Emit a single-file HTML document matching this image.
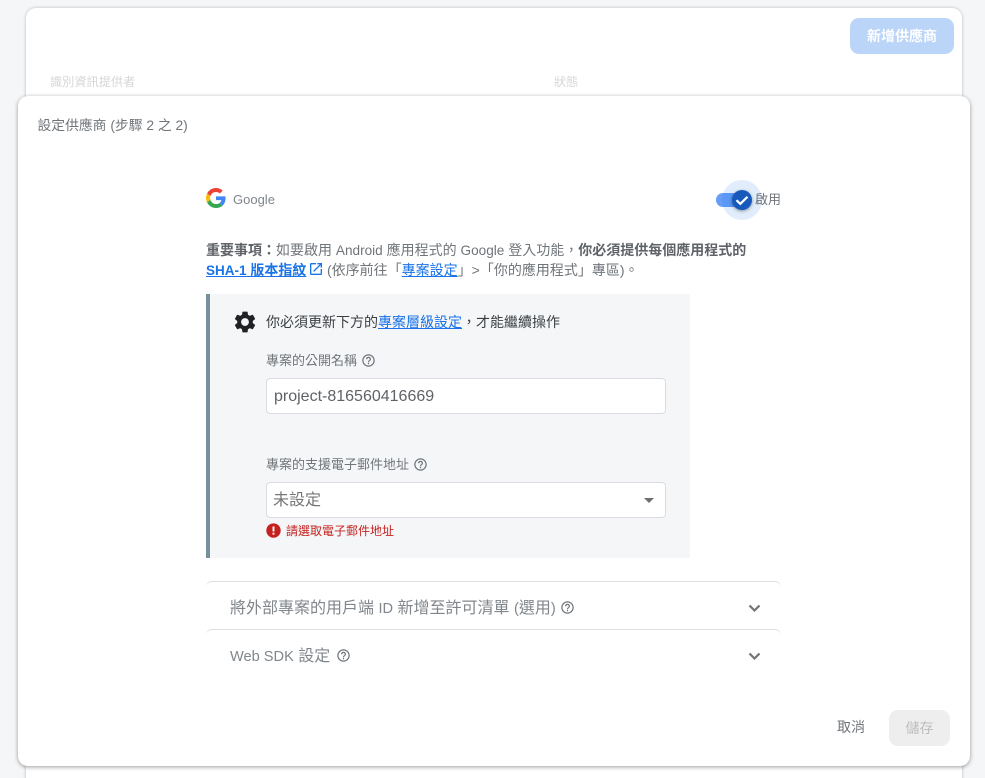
<!DOCTYPE html>
<html lang="zh-Hant">
<head>
<meta charset="utf-8">
<style>
html,body{margin:0;padding:0;width:985px;height:778px;overflow:hidden;background:#f5f6f8;font-family:"Liberation Sans","Noto Sans CJK TC",sans-serif;color:#70757a}
*{box-sizing:border-box}
#root{position:absolute;left:0;top:0;width:985px;height:778px;overflow:hidden}
.a{position:absolute;white-space:nowrap}
a{color:#1a73e8;text-decoration:underline}
.card{position:absolute;left:26px;top:8px;width:936px;height:790px;background:#fff;border-radius:10px;box-shadow:0 0 3px rgba(0,0,0,.25)}
.dlg{position:absolute;left:18px;top:96px;width:952px;height:670px;background:#fff;border-radius:10px;box-shadow:0 1px 4px rgba(0,0,0,.4)}
.t13{font-size:13px;line-height:20px}
.t14{font-size:14px;line-height:20px}
.l{font-size:13.6px}
.hr{position:absolute;left:206px;width:575px;height:8px;border-top:1px solid #dfdfdf;border-radius:6px 6px 0 0}
.field{position:absolute;left:266px;width:400px;height:36px;background:#fff;border:1px solid #dadce0;border-radius:4px}
.big{font-size:16px;line-height:20px;color:#80868b}
.big span{font-size:14.6px}
</style>
</head>
<body>
<div id="root">
<div class="card"></div>
<div class="a" style="left:850px;top:18px;width:104px;height:36px;border-radius:9px;background:#bbd5f8;color:#fff;font-size:14px;font-weight:700;line-height:36px;text-align:center">新增供應商</div>
<div class="a" style="left:50px;top:72px;font-size:12.2px;line-height:20px;color:#d6d6d6">識別資訊提供者</div>
<div class="a" style="left:554px;top:72px;font-size:12.2px;line-height:20px;color:#d6d6d6">狀態</div>

<div class="dlg"></div>
<div class="a" style="left:37.500px;top:116px;font-size:13.8px;line-height:20px;color:#70757a">設定供應商 (步驟 2 之 2)</div>

<svg class="a" style="left:206px;top:188px" width="20" height="20" viewBox="0 0 48 48"><path fill="#EA4335" d="M24 9.5c3.54 0 6.71 1.22 9.21 3.6l6.85-6.85C35.9 2.38 30.47 0 24 0 14.62 0 6.51 5.38 2.56 13.22l7.98 6.19C12.43 13.72 17.74 9.5 24 9.5z"/><path fill="#4285F4" d="M46.98 24.55c0-1.57-.15-3.09-.38-4.55H24v9.02h12.94c-.58 2.96-2.26 5.48-4.8 7.18l7.73 6c4.51-4.18 7.09-10.36 7.09-17.65z"/><path fill="#FBBC05" d="M10.53 28.59c-.48-1.45-.76-2.99-.76-4.59s.27-3.14.76-4.59l-7.98-6.19C.92 16.46 0 20.12 0 24c0 3.88.92 7.54 2.56 10.78l7.97-6.19z"/><path fill="#34A853" d="M24 48c6.48 0 11.93-2.13 15.89-5.81l-7.73-6c-2.15 1.45-4.92 2.3-8.16 2.3-6.26 0-11.57-4.22-13.47-9.91l-7.98 6.19C6.51 42.62 14.62 48 24 48z"/></svg>
<div class="a" style="left:233px;top:190px;font-size:13px;line-height:20px;color:#80868b">Google</div>

<div class="a" style="left:716px;top:193px;width:30px;height:14px;border-radius:7px;background:#669df6"></div>
<div class="a" style="left:722px;top:180px;width:40px;height:40px;border-radius:50%;background:rgba(26,115,232,.13)"></div>
<div class="a" style="left:732px;top:190px;width:20px;height:20px;border-radius:50%;background:#185abc;box-shadow:0 1px 3px rgba(0,0,0,.4)"></div>
<svg class="a" style="left:732px;top:190px" width="20" height="20" viewBox="0 0 20 20"><path d="M4.500 10.200l3.800 3.600L15.500 6.800" fill="none" stroke="#fff" stroke-width="2.200"/></svg>
<div class="a t13" style="left:755px;top:190px;color:#70757a">啟用</div>

<div class="a t14" style="left:206px;top:240px"><b style="color:#5f6368">重要事項&#xFF1A;</b>如要啟用 <span class="l">Android</span> 應用程式的 <span class="l">Google</span> 登入功能&#xFF0C;<b style="color:#5f6368">你必須提供每個應用程式的</b></div>
<div class="a t14" style="left:206px;top:260px"><a href="#" style="font-weight:700"><span style="font-size:13.500px">SHA-1</span> 版本指紋</a></div>
<svg class="a" style="left:308px;top:261px" width="16" height="16" viewBox="0 0 24 24"><path fill="#1a73e8" d="M19 19H5V5h7V3H5a2 2 0 0 0-2 2v14a2 2 0 0 0 2 2h14a2 2 0 0 0 2-2v-7h-2v7zM14 3v2h3.590l-9.830 9.830 1.410 1.410L19 6.410V10h2V3h-7z"/></svg>
<div class="a t14" style="left:327px;top:260px">(依序前往「<a href="#">專案設定</a>」&gt;「你的應用程式」專區)。</div>

<div class="a" style="left:206px;top:294px;width:484px;height:264px;background:#f5f6f8;border-left:4px solid #78909c"></div>
<svg class="a" style="left:232px;top:309px" width="26" height="26" viewBox="0 0 24 24"><path fill="#202124" d="M19.140 12.940c.04-.3.060-.61.060-.94 0-.32-.02-.64-.07-.94l2.030-1.580c.18-.14.230-.41.120-.61l-1.920-3.320c-.12-.22-.37-.29-.59-.22l-2.390.96c-.5-.38-1.030-.7-1.620-.94l-.36-2.540c-.04-.24-.24-.41-.48-.41h-3.840c-.24 0-.43.170-.47.410l-.36 2.540c-.59.24-1.130.57-1.620.94l-2.390-.96c-.22-.08-.47 0-.59.220L2.740 8.870c-.12.210-.08.470.12.610l2.030 1.580c-.05.3-.09.630-.09.940s.02.640.07.940l-2.030 1.580c-.18.14-.23.410-.12.610l1.920 3.320c.12.220.37.290.59.220l2.390-.96c.5.38 1.030.7 1.620.94l.36 2.540c.05.240.24.410.48.410h3.840c.24 0 .44-.17.47-.41l.36-2.540c.59-.24 1.130-.56 1.620-.94l2.390.96c.22.080.47 0 .59-.22l1.920-3.320c.12-.22.070-.47-.12-.61l-2.010-1.580zM12 15.600c-1.980 0-3.600-1.620-3.600-3.600s1.620-3.600 3.600-3.600 3.600 1.620 3.600 3.600-1.620 3.600-3.600 3.600z"/></svg>
<div class="a t14" style="left:266px;top:312px;color:#3c4043">你必須更新下方的<a href="#">專案層級設定</a>&#xFF0C;才能繼續操作</div>

<div class="a t13" style="left:266px;top:351px">專案的公開名稱</div>
<svg class="a" style="left:361px;top:353px" width="15" height="15" viewBox="0 0 24 24"><path fill="#70757a" d="M11 18h2v-2h-2v2zm1-16C6.480 2 2 6.480 2 12s4.480 10 10 10 10-4.480 10-10S17.520 2 12 2zm0 18c-4.410 0-8-3.590-8-8s3.590-8 8-8 8 3.590 8 8-3.590 8-8 8zm0-14c-2.210 0-4 1.790-4 4h2c0-1.100.9-2 2-2s2 .9 2 2c0 2-3 1.750-3 5h2c0-2.250 3-2.500 3-5 0-2.210-1.790-4-4-4z"/></svg>
<div class="field" style="top:378px"></div>
<div class="a" style="left:274px;top:387px;font-size:16px;line-height:20px;color:#5f6368">project-816560416669</div>

<div class="a t13" style="left:266px;top:455px">專案的支援電子郵件地址</div>
<svg class="a" style="left:413px;top:457px" width="15" height="15" viewBox="0 0 24 24"><path fill="#70757a" d="M11 18h2v-2h-2v2zm1-16C6.480 2 2 6.480 2 12s4.480 10 10 10 10-4.480 10-10S17.520 2 12 2zm0 18c-4.410 0-8-3.590-8-8s3.590-8 8-8 8 3.590 8 8-3.590 8-8 8zm0-14c-2.210 0-4 1.790-4 4h2c0-1.100.9-2 2-2s2 .9 2 2c0 2-3 1.750-3 5h2c0-2.250 3-2.500 3-5 0-2.210-1.790-4-4-4z"/></svg>
<div class="field" style="top:482px"></div>
<div class="a" style="left:273px;top:491px;font-size:16px;line-height:20px;color:#757575">未設定</div>
<div class="a" style="left:644px;top:498px;width:0;height:0;border-left:5px solid transparent;border-right:5px solid transparent;border-top:5px solid #6f6f6f"></div>

<svg class="a" style="left:266px;top:523px" width="15" height="15" viewBox="0 0 24 24"><circle cx="12" cy="12" r="11.500" fill="#c5221f"/><path d="M10.500 5.500h3v8h-3zM10.500 15.500h3v3h-3z" fill="#fff"/></svg>
<div class="a" style="left:286px;top:521px;font-size:12px;line-height:20px;color:#c5221f">請選取電子郵件地址</div>

<div class="hr" style="top:581px"></div>
<div class="a big" style="left:230px;top:599px">將外部專案的用戶端 <span>ID</span> 新增至許可清單 <span>(</span>選用<span>)</span></div>
<svg class="a" style="left:560px;top:600px" width="15" height="15" viewBox="0 0 24 24"><path fill="#70757a" d="M11 18h2v-2h-2v2zm1-16C6.480 2 2 6.480 2 12s4.480 10 10 10 10-4.480 10-10S17.520 2 12 2zm0 18c-4.410 0-8-3.590-8-8s3.590-8 8-8 8 3.590 8 8-3.590 8-8 8zm0-14c-2.210 0-4 1.790-4 4h2c0-1.100.9-2 2-2s2 .9 2 2c0 2-3 1.750-3 5h2c0-2.250 3-2.500 3-5 0-2.210-1.790-4-4-4z"/></svg>
<svg class="a" style="left:748px;top:603px" width="13" height="10" viewBox="0 0 13 10"><path d="M1.500 2.500l5 5 5-5" fill="none" stroke="#70757a" stroke-width="2.200"/></svg>

<div class="hr" style="top:629px"></div>
<div class="a big" style="left:230px;top:647px"><span>Web SDK</span> 設定</div>
<svg class="a" style="left:336px;top:648px" width="15" height="15" viewBox="0 0 24 24"><path fill="#70757a" d="M11 18h2v-2h-2v2zm1-16C6.480 2 2 6.480 2 12s4.480 10 10 10 10-4.480 10-10S17.520 2 12 2zm0 18c-4.410 0-8-3.590-8-8s3.590-8 8-8 8 3.590 8 8-3.590 8-8 8zm0-14c-2.210 0-4 1.790-4 4h2c0-1.100.9-2 2-2s2 .9 2 2c0 2-3 1.750-3 5h2c0-2.250 3-2.500 3-5 0-2.210-1.790-4-4-4z"/></svg>
<svg class="a" style="left:748px;top:651px" width="13" height="10" viewBox="0 0 13 10"><path d="M1.500 2.500l5 5 5-5" fill="none" stroke="#70757a" stroke-width="2.200"/></svg>

<div class="a" style="left:837px;top:717px;font-size:14px;line-height:20px;color:#70757a">取消</div>
<div class="a" style="left:889px;top:710px;width:61px;height:36px;border-radius:9px;background:#eeeeee;color:#bdbdbd;font-size:14px;line-height:36px;text-align:center">儲存</div>
</div>
</body>
</html>
